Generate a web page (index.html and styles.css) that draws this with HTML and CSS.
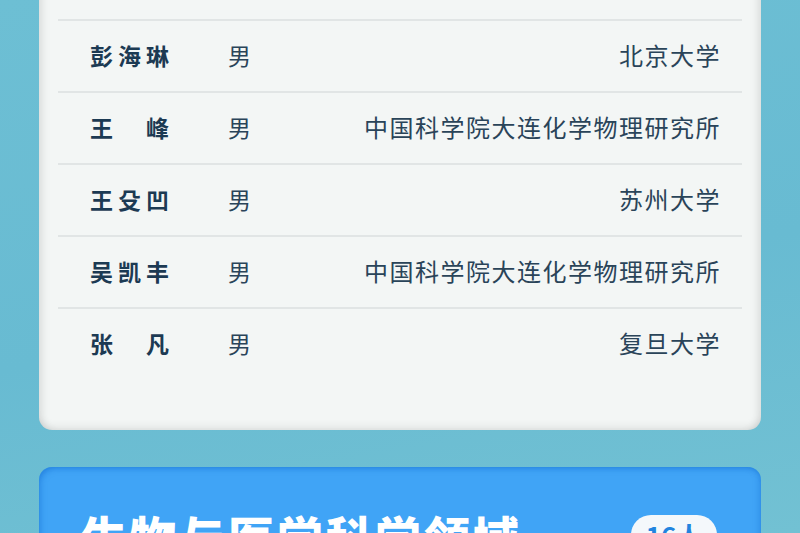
FILE: index.html
```html
<!DOCTYPE html>
<html>
<head>
    <meta charset="utf-8">
    <title>领域名单</title>
    <link rel="stylesheet" href="styles.css">
</head>
<body>

<div class="page">
    <div class="card list-card">
        <div class="row">
            <div class="name">彭海琳</div>
            <div class="gender">男</div>
            <div class="org">北京大学</div>
        </div>
        <div class="row">
            <div class="name">王　峰</div>
            <div class="gender">男</div>
            <div class="org">中国科学院大连化学物理研究所</div>
        </div>
        <div class="row">
            <div class="name">王殳凹</div>
            <div class="gender">男</div>
            <div class="org">苏州大学</div>
        </div>
        <div class="row">
            <div class="name">吴凯丰</div>
            <div class="gender">男</div>
            <div class="org">中国科学院大连化学物理研究所</div>
        </div>
        <div class="row">
            <div class="name">张　凡</div>
            <div class="gender">男</div>
            <div class="org">复旦大学</div>
        </div>
    </div>

    <div class="card field-card">
        <div class="field-title">生物与医学科学领域</div>
        <div class="badge">16人</div>
    </div>
</div>

</body>
</html>
```

FILE: styles.css
```css
html, body {
    margin: 0;
    padding: 0;
    height: 100%;
    overflow: hidden;
}

body {
    background: linear-gradient(170deg, #6dbfd4 0%, #68bbd2 55%, #72c1d3 100%);
    font-family: "Noto Sans CJK SC", "Noto Sans", sans-serif;
}

.page {
    padding: 0 39px;
}

.card {
    border-radius: 13px;
}

.list-card {
    margin-top: -41px;
    padding: 60px 19px 51px;
    background-color: #f3f6f5;
    box-shadow: inset 9px 0 10px -7px rgba(0, 0, 0, 0.13),
                inset -9px 0 10px -7px rgba(0, 0, 0, 0.13),
                inset 0 -10px 10px -8px rgba(0, 0, 0, 0.1);
}

.row {
    box-sizing: border-box;
    display: flex;
    align-items: center;
    height: 72px;
    border-top: 2px solid #e1e5e5;
    padding: 0 21px 3px 32px;
}

.name {
    width: 138px;
    font-size: 23px;
    font-weight: 700;
    letter-spacing: 5px;
    color: #1c3a53;
    white-space: nowrap;
}

.gender {
    font-size: 23px;
    color: #2a4459;
}

.org {
    flex: 1;
    text-align: right;
    font-size: 24px;
    letter-spacing: 1.5px;
    color: #2a4459;
    white-space: nowrap;
}

.field-card {
    margin-top: 37px;
    height: 200px;
    display: flex;
    align-items: flex-start;
    justify-content: space-between;
    padding: 39px 44px 0 42px;
    background-color: #40a4f6;
    box-shadow: inset 4px 4px 6px -3px rgba(20, 110, 210, 0.6),
                inset -4px 0 6px -3px rgba(20, 110, 210, 0.5);
}

.field-title {
    font-size: 46px;
    line-height: 58px;
    font-weight: 900;
    letter-spacing: 3px;
    color: #ffffff;
}

.badge {
    margin-top: 9px;
    width: 86px;
    height: 40px;
    border-radius: 20px;
    background-color: #f4f8fb;
    color: #2284df;
    font-size: 26px;
    font-weight: 700;
    text-align: center;
    line-height: 40px;
}
```
